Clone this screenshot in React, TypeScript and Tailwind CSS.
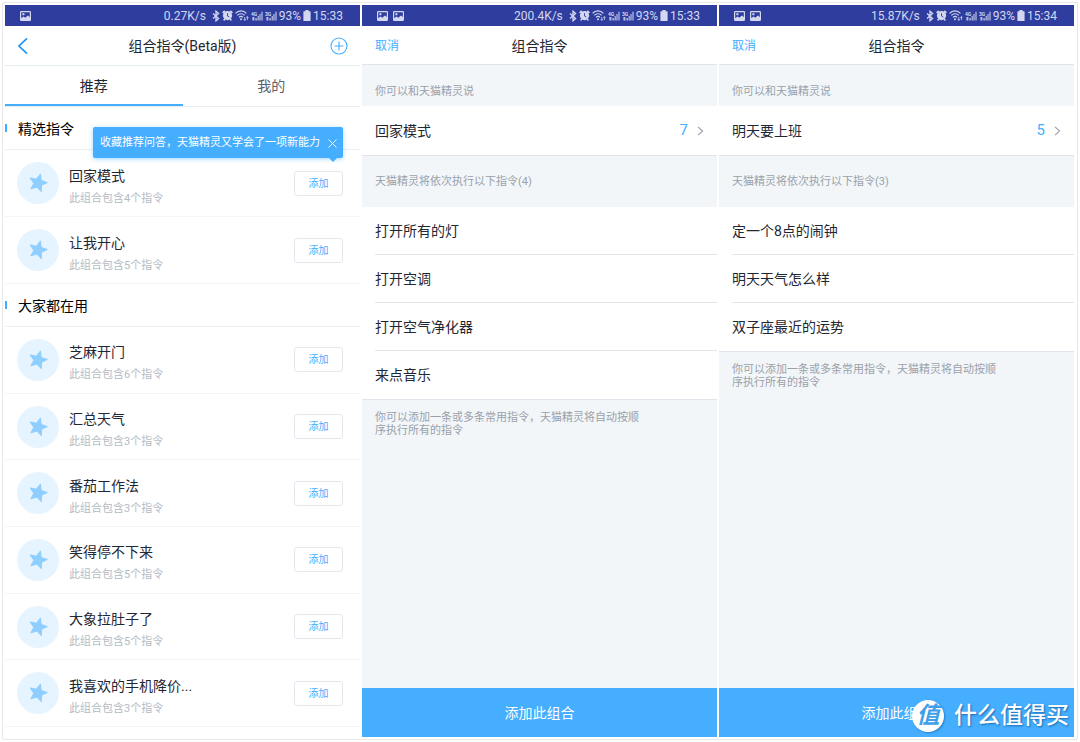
import { useState } from 'react';
import type { ReactNode } from 'react';

interface Combo {
  name: string;
  count: number;
}

interface DetailProps {
  speed: string;
  time: string;
  phrase: string;
  total: number;
  commands: string[];
}

const featured: Combo[] = [
  { name: '回家模式', count: 4 },
  { name: '让我开心', count: 5 },
];

const popular: Combo[] = [
  { name: '芝麻开门', count: 6 },
  { name: '汇总天气', count: 3 },
  { name: '番茄工作法', count: 3 },
  { name: '笑得停不下来', count: 5 },
  { name: '大象拉肚子了', count: 5 },
  { name: '我喜欢的手机降价...', count: 3 },
];

function PictureIcon() {
  return (
    <svg className="w-[11px] h-[10px]" viewBox="0 0 11 10" fill="none">
      <rect x="0.6" y="0.6" width="9.8" height="8.8" rx="0.6" stroke="#d3d8f0" strokeWidth="1.2" />
      <path d="M1 7.2 3.6 5.6l1.6 1.2L8 4.4l2 1.8V9H1Z" fill="#d3d8f0" />
      <rect x="2.4" y="2.2" width="2" height="2" fill="#d3d8f0" />
    </svg>
  );
}

function BluetoothIcon() {
  return (
    <svg className="w-[8px] h-[12px]" viewBox="0 0 8 12" fill="none" stroke="#d3d8f0" strokeWidth="1.3">
      <path d="M1 3.4 6.6 8.4 4 10.8V1.2L6.6 3.6 1 8.6" />
    </svg>
  );
}

function AlarmIcon() {
  return (
    <svg className="w-[11px] h-[11px]" viewBox="0 0 11 11">
      <path d="M0.6 2.8 2.8 0.8M10.4 2.8 8.2 0.8M1.6 10.4 3 9M9.4 10.4 8 9" stroke="#d3d8f0" strokeWidth="1.6" />
      <circle cx="5.5" cy="5.6" r="4.6" fill="#d3d8f0" />
      <path d="M5.5 3.2v2.8l1.8 1" stroke="#2f3e9e" strokeWidth="0.9" fill="none" />
    </svg>
  );
}

function WifiIcon() {
  return (
    <svg className="w-[14px] h-[11px]" viewBox="0 0 14 11" fill="none" stroke="#d3d8f0" strokeWidth="1.2">
      <path d="M0.6 3.4a7.2 7.2 0 0 1 10.8 0M2.4 5.4a4.8 4.8 0 0 1 7.2 0M4.1 7.3a2.6 2.6 0 0 1 3.8 0" />
      <circle cx="6" cy="9.2" r="1" fill="#d3d8f0" stroke="none" />
      <path d="M9.8 7v3.4M8.8 9.2 9.8 10.4l1-1.2M12.4 10V6.6M11.4 7.8l1-1.2 1 1.2" strokeWidth="0.8" />
    </svg>
  );
}

function SignalIcon({ network }: { network: string }) {
  return (
    <svg className="w-[12px] h-[10px]" viewBox="0 0 12 10" fill="#d3d8f0">
      <text x="0" y="4.6" fontSize="5" fontWeight="700" fontFamily="Roboto, sans-serif">{network}</text>
      <path d="M1.4 6h2v3.6h-2ZM4.4 7h1.4v2.6H4.4ZM6.6 5h1.2v4.6H6.6ZM8.4 3h1.2v6.6H8.4ZM10.4 0.8h1.2v8.8h-1.2Z" opacity="0.85" />
    </svg>
  );
}

function BatteryIcon() {
  return (
    <svg className="w-[8px] h-[11px]" viewBox="0 0 8 11" fill="#d3d8f0">
      <path d="M2.4 0h3.2v1.2H7a.6.6 0 0 1 .6.6v8.6a.6.6 0 0 1-.6.6H1a.6.6 0 0 1-.6-.6V1.8a.6.6 0 0 1 .6-.6h1.4Z" />
    </svg>
  );
}

function StarBadge() {
  return (
    <svg className="w-[42px] h-[42px] shrink-0" viewBox="0 0 42 42">
      <circle cx="21" cy="21" r="21" fill="#e5f4ff" />
      <path
        d="M21 12 23.4 17.8 29.6 18.2 24.8 22.2 26.3 28.3 21 25 15.7 28.3 17.2 22.2 12.4 18.2 18.6 17.8Z"
        transform="rotate(15 21 21)"
        fill="#8fcfff"
        stroke="#8fcfff"
        strokeWidth="1.2"
        strokeLinejoin="round"
      />
    </svg>
  );
}

function StatusBar({ images, speed, time }: { images: number; speed: string; time: string }) {
  return (
    <div className="h-[21px] bg-[#2f3e9e] text-[#d3d8f0] text-xs flex items-center justify-between pl-[15px] pr-[17px]">
      <div className="flex gap-[5px]">
        <PictureIcon />
        {images > 1 && <PictureIcon />}
      </div>
      <div className="flex items-center gap-[2px]">
        <span className="mr-1">{speed}</span>
        <BluetoothIcon />
        <AlarmIcon />
        <WifiIcon />
        <SignalIcon network="4G" />
        <SignalIcon network="3G" />
        <span>93%</span>
        <BatteryIcon />
        <span>{time}</span>
      </div>
    </div>
  );
}

function SectionTitle({ children }: { children: ReactNode }) {
  return (
    <div className="h-[43px] shrink-0 flex items-center border-b border-[#edf1f3]">
      <span className="w-[2px] h-2 bg-[#45aeff]" />
      <h2 className="ml-[11px] pt-[2px] text-sm text-black">{children}</h2>
    </div>
  );
}

function ComboRow({ combo }: { combo: Combo }) {
  return (
    <li className="flex-1 min-h-[66px] flex items-center pl-3 pr-[17px] border-b border-[#f3f5f6]">
      <StarBadge />
      <div className="ml-[10px] pt-2 flex-1">
        <p className="text-sm leading-5 text-[#1f2733]">{combo.name}</p>
        <p className="mt-[3px] text-[11px] leading-5 text-[#b4bbc4]">此组合包含{combo.count}个指令</p>
      </div>
      <button className="w-[49px] h-[25px] rounded-[3px] border border-[#e2e8ed] text-[10px] text-[#45aeff]">添加</button>
    </li>
  );
}

function ComboList() {
  const [showTip, setShowTip] = useState(true);

  return (
    <section className="flex-1 flex flex-col bg-white">
      <StatusBar images={1} speed="0.27K/s" time="15:33" />
      <header className="h-10 flex items-center justify-between pl-3 pr-3 border-b border-[#e3edf2]">
        <button aria-label="返回" className="w-5 flex">
          <svg className="w-[11px] h-[18px]" viewBox="0 0 11 18" fill="none" stroke="#1f94f5" strokeWidth="1.7">
            <path d="M10 1.4 2 9l8 7.6" />
          </svg>
        </button>
        <h1 className="text-sm text-[#1f2733]">组合指令(Beta版)</h1>
        <button aria-label="新建" className="w-5 flex justify-end">
          <svg className="w-[18px] h-[18px]" viewBox="0 0 18 18" fill="none" stroke="#45aeff" strokeWidth="1.1">
            <circle cx="9" cy="9" r="8" />
            <path d="M9 4.6v8.8M4.6 9h8.8" />
          </svg>
        </button>
      </header>
      <nav className="h-[41px] flex text-sm border-b border-[#e6edf0]">
        <button className="flex-1 pt-[2px] border-b-2 border-[#45aeff] text-[#1f2733]">推荐</button>
        <button className="flex-1 pt-[2px] border-b-2 border-transparent text-[#59616b]">我的</button>
      </nav>

      <div className="relative">
        <SectionTitle>精选指令</SectionTitle>
        {showTip && (
          <div className="absolute right-[17px] top-5 h-[31px] w-[250px] flex items-center justify-between pl-[7px] pr-[6px] pt-[2px] rounded-[2px] bg-[#45aeff] text-white text-[11px] shadow-[0_1px_4px_rgba(69,174,255,0.5)]">
            <span className="whitespace-nowrap">收藏推荐问答，天猫精灵又学会了一项新能力</span>
            <button aria-label="关闭" onClick={() => setShowTip(false)}>
              <svg className="w-[9px] h-[9px]" viewBox="0 0 9 9" stroke="#fff" strokeWidth="0.9">
                <path d="M0.5 0.5 8.5 8.5M8.5 0.5 0.5 8.5" />
              </svg>
            </button>
            <svg className="absolute right-[6px] top-full w-[8px] h-[4px]" viewBox="0 0 8 4" fill="#45aeff">
              <path d="M0 0h8L4 4Z" />
            </svg>
          </div>
        )}
      </div>
      <ul className="grid auto-rows-[67px]">
        {featured.map((combo) => <ComboRow key={combo.name} combo={combo} />)}
      </ul>
      <SectionTitle>大家都在用</SectionTitle>
      <ul className="flex-1 flex flex-col mb-[10px]">
        {popular.map((combo) => <ComboRow key={combo.name} combo={combo} />)}
      </ul>
    </section>
  );
}

function ComboDetail({ speed, time, phrase, total, commands }: DetailProps) {
  return (
    <section className="flex-1 flex flex-col bg-[#f2f6f9]">
      <StatusBar images={2} speed={speed} time={time} />
      <header className="h-[39px] grid grid-cols-3 items-center px-[13px] pt-[2px] bg-white border-b border-[#dfe5ea]">
        <button className="justify-self-start text-xs text-[#45aeff]">取消</button>
        <h1 className="justify-self-center text-sm text-[#1f2733]">组合指令</h1>
      </header>
      <p className="h-[41px] pt-[17px] px-[13px] text-[11px] leading-5 text-[#9aa1aa]">你可以和天猫精灵说</p>
      <button className="h-[50px] flex items-center px-[13px] bg-white border-b border-[#dfe5ea] text-sm text-[#1f2733]">
        <span className="flex-1 text-left">{phrase}</span>
        <span className="text-[15px] text-[#45aeff]">{total}</span>
        <svg className="ml-[9px] w-[7px] h-[10px]" viewBox="0 0 7 10" fill="none" stroke="#9aa1aa" strokeWidth="1.1">
          <path d="M1 0.8 5.6 5 1 9.2" />
        </svg>
      </button>
      <p className="h-[51px] pt-[2px] flex items-center px-[13px] text-[11px] text-[#9aa1aa]">
        天猫精灵将依次执行以下指令({commands.length})
      </p>
      <ul className="bg-white border-b border-[#dfe5ea] pl-[13px]">
        {commands.map((command) => (
          <li key={command} className="h-12 flex items-center border-b border-[#e3e7ea] last:border-b-0 text-sm text-[#1f2733]">
            {command}
          </li>
        ))}
      </ul>
      <p className="mt-[11px] ml-[13px] w-[270px] text-[11px] leading-[13px] text-[#9aa1aa]">
        你可以添加一条或多条常用指令，天猫精灵将自动按顺序执行所有的指令
      </p>
      <button className="mt-auto h-[49px] bg-[#45aeff] text-white text-sm">添加此组合</button>
    </section>
  );
}

function Watermark() {
  return (
    <div className="absolute right-[8px] bottom-[7px] flex items-center gap-[10px] text-white pointer-events-none">
      <span className="w-8 h-8 rounded-full bg-white text-[#3f9fe8] flex items-center justify-center text-[23px] leading-8 font-bold italic shadow-[1px_1px_2px_rgba(0,60,120,0.4)]">
        值
      </span>
      <span className="text-[23px] leading-8 font-medium [text-shadow:1px_1px_2px_rgba(0,60,120,0.6)]">什么值得买</span>
    </div>
  );
}

function App() {
  return (
    <div className="min-h-screen flex bg-white p-[2px] font-[Roboto,'Noto_Sans_CJK_SC',sans-serif]">
      <main className="relative flex-1 flex gap-[2px] pt-[2px] pb-[2px] pl-[2px] pr-[3px] border border-[#e8e8e8] rounded-[2px]">
        <ComboList />
        <ComboDetail
          speed="200.4K/s"
          time="15:33"
          phrase="回家模式"
          total={7}
          commands={['打开所有的灯', '打开空调', '打开空气净化器', '来点音乐']}
        />
        <ComboDetail
          speed="15.87K/s"
          time="15:34"
          phrase="明天要上班"
          total={5}
          commands={['定一个8点的闹钟', '明天天气怎么样', '双子座最近的运势']}
        />
        <Watermark />
      </main>
    </div>
  );
}

export default App;
